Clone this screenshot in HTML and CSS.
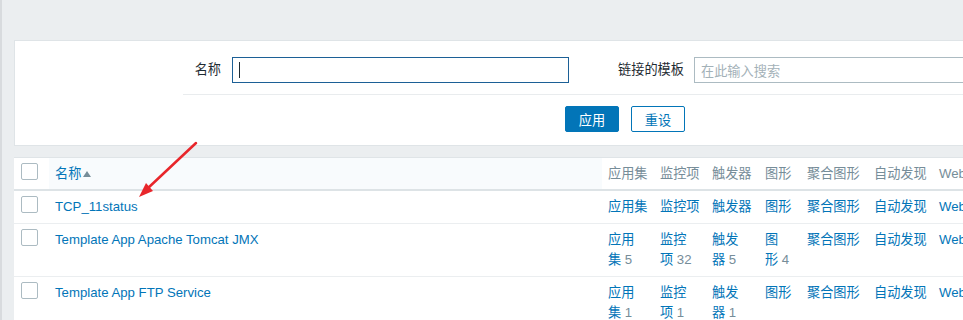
FILE: index.html
```html
<!DOCTYPE html>
<html lang="zh-CN">
<head>
	<meta charset="UTF-8">
	<title>模板</title>
	<link rel="stylesheet" href="styles.css">
</head>
<body>
	<div id="page">
		<!-- 过滤器 -->
		<div class="filter">
			<div class="filter-row">
				<label class="flabel name-label">名称</label>
				<div class="finput focused"><span class="caret"></span></div>
				<label class="flabel tpl-label">链接的模板</label>
				<div class="finput wide"><span class="placeholder">在此输入搜索</span></div>
			</div>
			<div class="filter-btns">
				<button class="btn primary">应用</button>
				<button class="btn alt">重设</button>
			</div>
		</div>

		<!-- 模板列表 -->
		<table class="list">
			<colgroup>
				<col class="c-cb">
				<col class="c-name">
				<col class="c-app">
				<col class="c-item">
				<col class="c-trig">
				<col class="c-graph">
				<col class="c-screen">
				<col class="c-disc">
				<col class="c-web">
				<col>
			</colgroup>
			<thead>
				<tr>
					<th class="cb"><span class="checkbox"></span></th>
					<th class="sorted"><a>名称</a><span class="arrow-up"></span></th>
					<th>应用集</th>
					<th>监控项</th>
					<th>触发器</th>
					<th>图形</th>
					<th>聚合图形</th>
					<th>自动发现</th>
					<th>Web</th>
					<th></th>
				</tr>
			</thead>
			<tbody>
				<tr>
					<td class="cb"><span class="checkbox"></span></td>
					<td><a>TCP_11status</a></td>
					<td><a>应用集</a></td>
					<td><a>监控项</a></td>
					<td><a>触发器</a></td>
					<td><a>图形</a></td>
					<td><a>聚合图形</a></td>
					<td><a>自动发现</a></td>
					<td><a>Web</a></td>
					<td></td>
				</tr>
				<tr>
					<td class="cb"><span class="checkbox"></span></td>
					<td><a>Template App Apache Tomcat JMX</a></td>
					<td><a>应用集</a>&nbsp;<span class="cnt">5</span></td>
					<td><a>监控项</a>&nbsp;<span class="cnt">32</span></td>
					<td><a>触发器</a>&nbsp;<span class="cnt">5</span></td>
					<td><a>图形</a>&nbsp;<span class="cnt">4</span></td>
					<td><a>聚合图形</a></td>
					<td><a>自动发现</a></td>
					<td><a>Web</a></td>
					<td></td>
				</tr>
				<tr>
					<td class="cb"><span class="checkbox"></span></td>
					<td><a>Template App FTP Service</a></td>
					<td><a>应用集</a>&nbsp;<span class="cnt">1</span></td>
					<td><a>监控项</a>&nbsp;<span class="cnt">1</span></td>
					<td><a>触发器</a>&nbsp;<span class="cnt">1</span></td>
					<td><a>图形</a></td>
					<td><a>聚合图形</a></td>
					<td><a>自动发现</a></td>
					<td><a>Web</a></td>
					<td></td>
				</tr>
			</tbody>
		</table>

		<!-- 红色标注箭头 -->
		<svg class="annot" width="963" height="320" viewBox="0 0 963 320">
			<line x1="196" y1="143" x2="147" y2="189" stroke="#e8262b" stroke-width="2.5" stroke-linecap="round"/>
			<polygon points="139,197 153,191 146,183" fill="#e8262b"/>
		</svg>
	</div>
</body>
</html>
```

FILE: styles.css
```css
* {
	margin:0;
	padding:0;
	box-sizing:border-box;
}
html, body {
	width:963px;
	height:320px;
	overflow:hidden;
}
body {
	background:#ebeef0;
	font-family:"Liberation Sans", "Noto Sans CJK SC", sans-serif;
	font-size:13.2px;
	color:#1f2c33;
}
#page {
	position:relative;
	width:1300px;
	height:320px;
	padding:40px 0 0 12px;
	border-left:2px solid #d8dbde;
}
a {
	color:#0275b8;
	text-decoration:none;
}

/* 过滤器 */
.filter {
	background:#fff;
	border:1px solid #dfe4e7;
	border-right:none;
}
.filter-row {
	display:flex;
	align-items:center;
	margin-left:168px;
	padding:16px 0 11px;
	border-bottom:1px solid #e9ecee;
}
.flabel {
	text-align:right;
	line-height:20px;
}
.name-label {
	width:38px;
	margin-right:11px;
}
.tpl-label {
	width:115px;
	margin-right:10px;
}
.finput {
	display:flex;
	align-items:center;
	height:26px;
	width:337px;
	padding-left:6px;
	border:1px solid #acbbc2;
	background:#fff;
}
.finput.focused {
	border-color:#1c6096;
}
.finput.wide {
	width:420px;
}
.caret {
	display:block;
	width:1px;
	height:16px;
	background:#1f2c33;
}
.placeholder {
	color:#a3b1b8;
}
.filter-btns {
	display:flex;
	gap:12px;
	padding:11px 0 13px 550px;
}
.btn {
	width:54px;
	height:26px;
	border:1px solid #0275b8;
	border-radius:2px;
	font-family:inherit;
	font-size:13.2px;
}
.btn.primary {
	background:#0275b8;
	color:#fff;
}
.btn.alt {
	background:#fff;
	color:#0275b8;
}

/* 列表 */
.list {
	margin-top:11px;
	width:1280px;
	table-layout:fixed;
	border-collapse:collapse;
	background:#fff;
	border-top:1px solid #dfe4e7;
}
.c-cb { width:35px; }
.c-name { width:553px; }
.c-app { width:52px; }
.c-item { width:52px; }
.c-trig { width:53px; }
.c-graph { width:42px; }
.c-screen { width:67px; }
.c-disc { width:65px; }
.c-web { width:80px; }
th, td {
	padding:6px 5px 6px 6px;
	line-height:20px;
	text-align:left;
	vertical-align:top;
	font-weight:normal;
}
th {
	padding-top:5.5px;
	padding-bottom:5.5px;
	color:#768d99;
	white-space:nowrap;
	border-bottom:2px solid #dde3e6;
}
th.sorted {
	background:#f8fbfd;
}
td {
	border-bottom:1px solid #ebeef0;
}
th.cb, td.cb {
	padding:5px 0 0 7px;
}
.checkbox {
	display:block;
	width:17px;
	height:17px;
	border:1px solid #acbbc2;
	border-radius:2px;
	background:#fff;
}
.arrow-up {
	display:inline-block;
	margin-left:2px;
	border-left:4.5px solid transparent;
	border-right:4.5px solid transparent;
	border-bottom:6px solid #768d99;
	vertical-align:1px;
}
.cnt {
	color:#768d99;
}

/* 标注 */
.annot {
	position:absolute;
	left:-2px;
	top:0;
	pointer-events:none;
}
```
